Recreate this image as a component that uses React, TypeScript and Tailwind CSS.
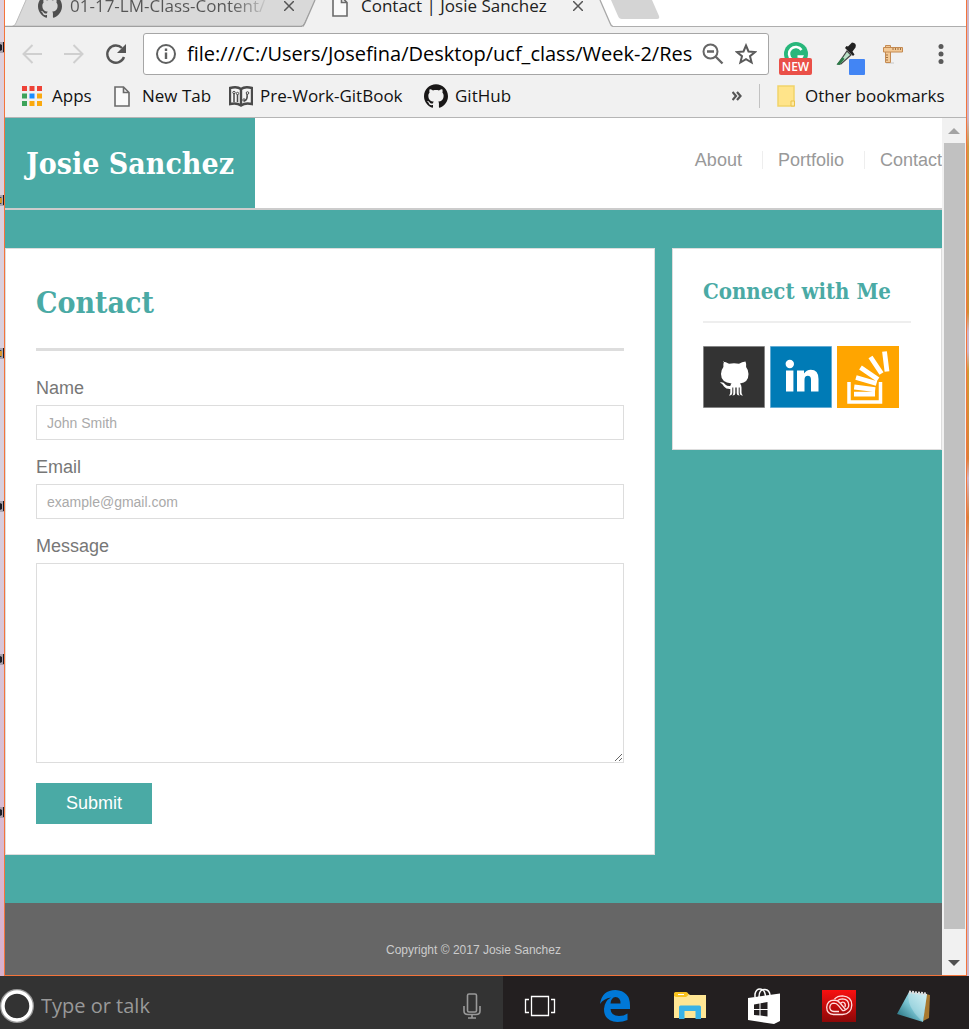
import type { ReactNode } from "react";
import { SiGithub } from "react-icons/si";

const chromeFont = "font-['Open_Sans','Noto_Sans',sans-serif]";
const headingFont = "font-['DejaVu_Serif_Condensed','DejaVu_Serif',serif] font-bold";

function IconButton({ label, className = "", children }: { label: string; className?: string; children: ReactNode }) {
  return (
    <button type="button" aria-label={label} className={`flex shrink-0 items-center justify-center ${className}`}>
      {children}
    </button>
  );
}

function PageIcon({ className = "" }: { className?: string }) {
  return (
    <svg viewBox="0 0 16 21" className={`h-[21px] w-4 shrink-0 ${className}`} fill="none" stroke="#6b6b6b" strokeWidth="1.6">
      <path d="M1 1h8.5L15 6.500V20H1zM9.500 1v5.500H15" fill="#fafafa" />
    </svg>
  );
}

function CloseIcon() {
  return (
    <svg viewBox="0 0 10 10" className="size-[10px]" stroke="#555" strokeWidth="1.5">
      <path d="M0 0l10 10M10 0L0 10" />
    </svg>
  );
}

function TabStrip() {
  return (
    <div className="flex h-[27px] items-end overflow-hidden bg-white">
      <div className="relative flex h-[42px] w-[310px] shrink-0 items-center pl-[33px]">
        <svg viewBox="0 0 310 27" className="absolute bottom-0 left-0 h-[27px] w-[310px]">
          <path d="M7 26.500Q10 26 11 23L21 0H311L300 23Q299 26 296 26.500z" fill="#d9d9d9" />
          <path d="M7 26.500Q10 26 11 23L21 0" fill="none" stroke="#bbb" />
          <path d="M0 26.500H296Q299 26 300 23L311 0" fill="none" stroke="#a0a0a0" strokeWidth="1.3" />
        </svg>
        <SiGithub className="relative size-6 shrink-0 text-[#4f4f4f]" />
        <a
          href="#class-content"
          className="relative ml-2 w-[200px] overflow-hidden whitespace-nowrap bg-linear-to-r from-[#555] from-80% to-[#d9d9d9] bg-clip-text text-[17px] leading-6 text-transparent"
        >
          01-17-LM-Class-Content/
        </a>
        <IconButton label="Close tab" className="relative ml-3.5">
          <CloseIcon />
        </IconButton>
      </div>
      <div className="relative -ml-3 flex h-[42px] w-[310px] shrink-0 items-center pl-[29px]">
        <svg viewBox="0 0 310 27" className="absolute bottom-0 left-0 h-[27px] w-[310px]">
          <path d="M0 27Q1 26 2 23L12 0H297L307 23Q308 26 310 27z" fill="#f1f1f1" />
          <path d="M0 26.500L2 23L12 0" fill="none" stroke="#a0a0a0" strokeWidth="1.3" />
          <path d="M297 0L307 23Q308 26 310 26.500" fill="none" stroke="#a8a8a8" strokeWidth="1.3" />
        </svg>
        <PageIcon className="relative" />
        <a href="#contact" className="relative ml-[13px] w-[194px] whitespace-nowrap text-[17px] leading-6 text-[#222]">
          Contact | Josie Sanchez
        </a>
        <IconButton label="Close tab" className="relative ml-[18px]">
          <CloseIcon />
        </IconButton>
      </div>
      <div className="h-[27px] flex-1 border-b border-[#aeaeae]">
        <svg viewBox="0 0 51 20" className="-ml-1 h-5 w-[51px]">
          <path d="M2 0L9 16Q10 19 13 19H48Q51 19 50 16L43 0z" fill="#d4d4d4" />
        </svg>
      </div>
    </div>
  );
}

function Toolbar() {
  return (
    <div className="flex h-12 items-center bg-[#f1f1f1] pt-1.5 pl-[17px]">
      <IconButton label="Back">
        <svg viewBox="0 0 20 20" className="size-5" fill="none" stroke="#cfcfcf" strokeWidth="2">
          <path d="M20 10H1.500M10.500 1L1.500 10l9 9" />
        </svg>
      </IconButton>
      <IconButton label="Forward" className="ml-[22px]">
        <svg viewBox="0 0 20 20" className="size-5" fill="none" stroke="#cfcfcf" strokeWidth="2">
          <path d="M0 10h18.500M9.500 1l9 9-9 9" />
        </svg>
      </IconButton>
      <IconButton label="Reload" className="ml-[21px]">
        <svg viewBox="0 0 22 22" className="size-[22px]">
          <path d="M19 14A8.600 8.600 0 1 1 17 5" fill="none" stroke="#555" strokeWidth="2.400" />
          <path d="M21 1v9h-9z" fill="#555" />
        </svg>
      </IconButton>
      <div className="ml-4 flex h-[42px] min-w-0 flex-1 items-center rounded-[3px] border border-[#a6a6a6] bg-white px-[11px]">
        <IconButton label="View site information">
          <svg viewBox="0 0 22 22" className="size-[22px]" fill="none" stroke="#5f6060" strokeWidth="2">
            <circle cx="11" cy="11" r="9" />
            <path d="M11 9.500V16M11 5.500V8" strokeWidth="2.400" />
          </svg>
        </IconButton>
        <input
          aria-label="Address"
          readOnly
          value="file:///C:/Users/Josefina/Desktop/ucf_class/Week-2/Resume"
          className="ml-2.5 min-w-0 flex-1 bg-transparent text-[20px] text-black outline-none"
        />
        <IconButton label="Zoom" className="ml-2.5">
          <svg viewBox="0 0 22 22" className="size-[22px]" fill="none" stroke="#666" strokeWidth="2">
            <circle cx="8.500" cy="8.500" r="7" />
            <path d="M5 8.500h7M13.500 13.500l7 7" strokeWidth="2.400" />
          </svg>
        </IconButton>
        <IconButton label="Bookmark this page" className="ml-[11px]">
          <svg viewBox="0 0 22 22" className="size-[22px]" fill="none" stroke="#5a5a5a" strokeWidth="2">
            <path d="M11 2.500l2.500 6 6.500.5-5 4.200 1.600 6.300L11 16.100l-5.600 3.400L7 13.200 2 9l6.500-.5z" />
          </svg>
        </IconButton>
      </div>
      <button
        type="button"
        aria-label="Grammarly"
        className="relative ml-2.5 flex h-[33px] w-[33px] shrink-0 items-start justify-center self-end"
      >
        <svg viewBox="0 0 24 24" className="size-6">
          <circle cx="12" cy="12" r="12" fill="#28b77b" />
          <path d="M17.500 8A6.800 6.800 0 1 0 18 14.500h-4.500" fill="none" stroke="#fff" strokeWidth="2.500" />
        </svg>
        <span className="absolute bottom-0 left-0 flex h-[17px] w-full items-center justify-center rounded-[2px] bg-[#ea5048] text-[12px] font-semibold text-white">
          NEW
        </span>
      </button>
      <IconButton label="Color picker" className="ml-6 self-end">
        <svg viewBox="0 0 29 33" className="h-[33px] w-[29px]">
          <path d="M2 22L11 9l4 4L5 22z" fill="#b9dfc6" stroke="#444" strokeWidth="1.200" />
          <path d="M.5 22.500l6-7.500 2 2-5 6z" fill="#2d7a48" />
          <path d="M9 6l8 8 1.500-1.500-2-3 3-4Q21 1 16 .5l-4 4-1.500-.5z" fill="#222" />
          <rect x="13" y="17" width="16" height="16" rx="1" fill="#4285f4" />
        </svg>
      </IconButton>
      <IconButton label="Page ruler" className="ml-[18px]">
        <svg viewBox="0 0 20 20" className="size-5">
          <path d="M3 19h8" stroke="#d4d4d4" strokeWidth="1.500" />
          <path d="M2.500 1.500h5v17h-5z" fill="#f3c995" stroke="#c48a52" />
          <path d="M.5 3.500h19v4.500H.5z" fill="#f3c995" stroke="#c48a52" />
          <path d="M10 4v2M12.500 4v2M15 4v2M17.500 4v2M3 11h2M3 13.500h2M3 16h2" stroke="#8c5a2f" strokeWidth=".8" />
        </svg>
      </IconButton>
      <IconButton label="Menu" className="mr-[22px] ml-[35px]">
        <svg viewBox="0 0 6 20" className="h-5 w-1.5" fill="#5a5a5a">
          <circle cx="3" cy="2.500" r="2.500" />
          <circle cx="3" cy="10" r="2.500" />
          <circle cx="3" cy="17.500" r="2.500" />
        </svg>
      </IconButton>
    </div>
  );
}

function Bookmark({ icon, label, className = "" }: { icon: ReactNode; label: string; className?: string }) {
  return (
    <a href="#bookmark" className={`flex shrink-0 items-center ${className}`}>
      {icon}
      <span>{label}</span>
    </a>
  );
}

function BookmarksBar() {
  return (
    <div className="flex h-[43px] items-center border-b border-[#b5b5b5] bg-[#f1f1f1] pr-[21px] pl-[17px] text-[17px] text-[#111]">
      <Bookmark
        label="Apps"
        className="w-[92px] gap-2.5"
        icon={
          <svg viewBox="0 0 20 20" className="size-5 shrink-0">
            <path d="M0 0h5v5H0zM7.500 0h5v5h-5zM15 0h5v5h-5z" fill="#ee4237" />
            <path d="M0 7.500h5v5H0zM0 15h5v5H0z" fill="#3da35a" />
            <path d="M7.500 7.500h5v5h-5z" fill="#1a8cff" />
            <path d="M15 7.500h5v5h-5zM7.500 15h5v5h-5zM15 15h5v5h-5z" fill="#faa90f" />
          </svg>
        }
      />
      <Bookmark label="New Tab" className="w-[115px] gap-3" icon={<PageIcon />} />
      <Bookmark
        label="Pre-Work-GitBook"
        className="w-[195px] gap-[7px]"
        icon={
          <svg viewBox="0 0 24 21" className="h-[21px] w-6 shrink-0" fill="none" stroke="#4a4a4a">
            <path d="M1 2Q8 0 12 3Q16 0 23 2V18Q16 16.500 12 19.500Q8 16.500 1 18z" strokeWidth="2.400" fill="#f5f5f5" />
            <path d="M12 3v17" strokeWidth="2.400" />
            <path d="M5 7v9M8.500 16V8.500M15 15q4-1 3-7" strokeWidth="1.500" />
            <circle cx="5" cy="6.500" r="1.200" />
            <circle cx="8.500" cy="7.500" r="1.200" />
            <circle cx="18.500" cy="7" r="1.300" />
            <circle cx="15" cy="14" r="1.200" />
          </svg>
        }
      />
      <Bookmark label="GitHub" className="gap-[7px]" icon={<SiGithub className="size-6 shrink-0 text-[#191717]" />} />
      <IconButton label="More bookmarks" className="ml-auto">
        <svg viewBox="0 0 10 10" className="size-2.5" fill="none" stroke="#555" strokeWidth="2.200">
          <path d="M.5 1L4 5 .5 9M5 1l3.500 4L5 9" />
        </svg>
      </IconButton>
      <div className="mx-[17px] h-6 w-px bg-[#c2c2c2]" />
      <Bookmark
        label="Other bookmarks"
        className="w-[168px] gap-2.5"
        icon={
          <svg viewBox="0 0 18 22" className="h-[22px] w-[18px] shrink-0">
            <path d="M1 1h16v20H1z" fill="#ffe48a" stroke="#f1d36b" strokeWidth="1.500" />
            <path d="M14 21v-5h3.500v5z" fill="#ffeaa2" stroke="#eac24a" />
          </svg>
        }
      />
    </div>
  );
}

function SiteHeader() {
  return (
    <header className="flex h-[92px] items-center justify-between border-b-2 border-[#ccc] bg-white">
      <h1 className={`flex h-full w-[250px] items-center justify-center bg-[#4aaaa5] text-[30px] text-white ${headingFont}`}>
        <a href="#home">Josie Sanchez</a>
      </h1>
      <nav className="mb-1.5 flex text-[18px] leading-[18px] text-[#999]">
        <a href="#about" className="border-r border-[#eee] pr-5">About</a>
        <a href="#portfolio" className="border-r border-[#eee] pr-5 pl-[15px]">Portfolio</a>
        <a href="#contact" className="pl-[15px]">Contact</a>
      </nav>
    </header>
  );
}

function ContactForm() {
  const label = "mb-[3px] block text-[18px] leading-7 text-[#777]";
  const field = "block w-full border border-[#ddd] bg-white px-2.5 text-[14px] text-[#777] outline-none placeholder:text-[#aaa]";
  return (
    <section id="contact" className="min-w-0 flex-1 border border-[#ddd] bg-white p-[30px]">
      <h2 className={`mb-[23px] border-b-[3px] border-[#ddd] pb-[21px] text-[30px] leading-[48px] text-[#4aaaa5] ${headingFont}`}>
        Contact
      </h2>
      <form onSubmit={(e) => e.preventDefault()}>
        <label htmlFor="name" className={label}>Name</label>
        <input id="name" placeholder="John Smith" className={`${field} mb-[13px] h-[35px]`} />
        <label htmlFor="email" className={label}>Email</label>
        <input id="email" type="email" placeholder="example@gmail.com" className={`${field} mb-[13px] h-[35px]`} />
        <label htmlFor="message" className={label}>Message</label>
        <textarea id="message" className={`${field} mb-5 h-[200px] resize-y py-2`} />
        <button type="submit" className="block h-[41px] bg-[#4aaaa5] px-[30px] text-[18px] text-white">
          Submit
        </button>
      </form>
    </section>
  );
}

function Connect() {
  return (
    <aside className="w-[270px] shrink-0 border border-[#ddd] bg-white px-[30px] pt-[30px] pb-[41px]">
      <h3 className={`mb-[23px] border-b-2 border-[#eee] pb-[18px] text-[22px] leading-6 whitespace-nowrap text-[#4aaaa5] ${headingFont}`}>
        Connect with Me
      </h3>
      <div className="flex gap-[5px]">
        <a href="#github" aria-label="GitHub">
          <svg viewBox="0 0 62 62" className="size-[62px]">
            <rect width="62" height="62" fill="#aaa" />
            <rect x=".7" y=".7" width="60.600" height="60.600" fill="#333" />
            <path
              d="M19.500 15.500q3.500.3 6.500 2.200q5-.8 10 0q3-2 6.500-2.200q1.200 3 .6 5.500q2.400 3 2.400 7q0 8.500-8.500 9.500q1.500 1.500 1.500 4v5q0 2 1.500 3q-3.300.3-3.300-3v-5h-1v5.500q0 1.500 1 2.500q-3 0-3-2.500v-5.500h-1.400v5.500q0 2.500-3 2.500q1-1 1-2.500v-5.500h-1v5q0 3.300-3.500 3q1.500-1 1.500-3v-3.500q-4.300.2-6.300-2.500q-1.500-3-4.200-4q3.500-1 5.500 2q2 2 5 1.500q.2-1.500 1.200-2.500q-10.500-1-10.500-9.500q0-4 2.400-7q-.5-2.500.6-5.500z"
              fill="#fff"
            />
          </svg>
        </a>
        <a href="#linkedin" aria-label="LinkedIn">
          <svg viewBox="0 0 62 62" className="size-[62px]">
            <rect width="62" height="62" fill="#8fc1e0" />
            <rect x=".7" y=".7" width="60.600" height="60.600" fill="#007bb6" />
            <circle cx="19.800" cy="18" r="4.200" fill="#fff" />
            <path
              d="M16 24.500h7.400v21H16zM27 24.500h7v3q2.300-3.800 6.800-3.800q7.700 0 7.700 9.300V45.500H41V34q0-4.200-3.200-4.200q-3.300 0-3.300 4.200V45.500H27z"
              fill="#fff"
            />
          </svg>
        </a>
        <a href="#stack-overflow" aria-label="Stack Overflow">
          <svg viewBox="0 0 62 62" className="size-[62px]">
            <rect width="62" height="62" fill="#ffa500" />
            <path d="M12 36v20h31.500V36" fill="none" stroke="#fff" strokeWidth="3.500" />
            <path
              d="M17 48.200h21M17.200 41l21 2.600M19 31.500l20.500 6M23.500 21.500l17.500 12M33.500 11l11 16.500M47.500 5.500l2.500 20"
              stroke="#fff"
              strokeWidth="4.800"
            />
          </svg>
        </a>
      </div>
    </aside>
  );
}

function Scrollbar() {
  return (
    <div className="flex w-6 shrink-0 flex-col items-center bg-[#f1f1f1]">
      <IconButton label="Scroll up" className="h-[25px] w-full">
        <svg viewBox="0 0 12 6" className="h-1.5 w-3"><path d="M0 6l6-6 6 6z" fill="#a3a3a3" /></svg>
      </IconButton>
      <div className="w-[21px] flex-1 bg-[#c1c1c1]" />
      <IconButton label="Scroll down" className="mt-[21px] h-[25px] w-full">
        <svg viewBox="0 0 12 6" className="h-1.5 w-3"><path d="M0 0h12L6 6z" fill="#505050" /></svg>
      </IconButton>
    </div>
  );
}

function Taskbar() {
  return (
    <div className="flex h-[53px] bg-[#231f20]">
      <div className="flex w-[503px] shrink-0 items-center bg-[#333] pt-[7px]">
        <IconButton label="Cortana">
          <svg viewBox="0 0 34 34" className="size-[34px]" fill="none">
            <circle cx="17" cy="17" r="15" stroke="#999" strokeWidth="4" />
            <circle cx="17" cy="17" r="14" stroke="#fff" strokeWidth="3.400" />
          </svg>
        </IconButton>
        <input
          aria-label="Type or talk"
          placeholder="Type or talk"
          className="ml-[7px] min-w-0 flex-1 bg-transparent text-[20px] outline-none placeholder:text-[#999]"
        />
        <IconButton label="Voice search" className="mr-[22px]">
          <svg viewBox="0 0 18 26" className="h-[26px] w-[18px]" fill="none" stroke="#999" strokeWidth="1.600">
            <rect x="4.500" y="1" width="9" height="18" rx="1.500" />
            <path d="M1 13v5q0 3.500 4 3.500h8q4 0 4-3.500v-5M9 21.500V25M5 25h8" />
          </svg>
        </IconButton>
      </div>
      <div className="grid flex-1 grid-cols-6 items-center pt-1.5 pr-[18px]">
        <IconButton label="Task view">
          <svg viewBox="0 0 32 22" className="h-[22px] w-8" fill="none" stroke="#fff" strokeWidth="1.300">
            <path d="M7.500 1.500h17v19h-17zM5 4.500H1.500v13H5M27 4.500h3.500v13H27" />
          </svg>
        </IconButton>
        <IconButton label="Edge">
          <svg viewBox="0 0 30 32" className="h-8 w-[30px]">
            <path
              d="M0 14Q2 0 15.500 0Q30 1 30 15.500V19H10.500Q11 26 19 26Q24 26 27.500 23.500V30Q23 32 17.500 32Q4 31.500 4 19Q4.500 11 11 7.500Q3.500 8.500 0 14zM10.500 13.500h10Q20.500 7 15.500 7Q11 7.500 10.500 13.500z"
              fill="#0078d7"
            />
          </svg>
        </IconButton>
        <IconButton label="File Explorer">
          <svg viewBox="0 0 32 27" className="h-[27px] w-8">
            <path d="M0 2Q0 1 1 1H13L16 3H32V26H0z" fill="#ffe694" />
            <path d="M0 4V1.500Q0 0 1.500 0H12q2 0 2.500 3L12 5H2z" fill="#f9c31f" />
            <path d="M4 2.500h6" stroke="#fff" />
            <path d="M5 27V15q0-1.500 1.500-1.500h19q1.500 0 1.500 1.500V27h-5.500v-8h-11v8z" fill="#39b2e6" />
          </svg>
        </IconButton>
        <IconButton label="Store">
          <svg viewBox="0 0 32 36" className="h-9 w-8">
            <path d="M7 9V6Q8 1 12 1Q16.500 1 17.500 8M11 9Q11 1 17 1.500Q21.500 2 22 7" fill="none" stroke="#fff" strokeWidth="1.500" />
            <path d="M0 10L32 5.500V33L26 36 0 32z" fill="#fff" />
            <path d="M6 16.500l5.500-1v5.500H6zM12.500 15.300l7-1.200V21h-7zM6 22h5.500v5.500l-5.500-.6zM12.500 22h7v6.500l-7-.9z" fill="#231f20" />
          </svg>
        </IconButton>
        <IconButton label="Creative Cloud">
          <svg viewBox="0 0 34 32" className="h-8 w-[34px]">
            <defs>
              <linearGradient id="cloud-red" x1="0" y1="0" x2="0" y2="1">
                <stop offset="0" stopColor="#f91010" />
                <stop offset="1" stopColor="#8c0707" />
              </linearGradient>
            </defs>
            <rect width="34" height="32" fill="url(#cloud-red)" />
            <g fill="none" stroke="#ffdede" strokeWidth="1.300">
              <path d="M12.500 9Q15.500 5.800 20.500 5.800Q29.800 6.500 29.800 15Q29.500 24 20.500 24.500H11.500Q4.700 24 4.700 17.200Q5.200 10.500 12 10.200Q16 10.400 18.500 13.500L23.500 19.500" />
              <path d="M17 21.500H12Q7.800 21.200 7.800 17.200Q8.300 13.200 12 13.200Q14.500 13.300 16.500 15.700L20.500 20.500Q21 21 22.500 20.300Q26.800 18.500 26.800 15Q26.500 9 20.500 8.800Q17.500 8.800 15.300 10.800" />
              <path d="M18.500 13.500Q20 11.500 22 12.500Q24 14 23 17" />
            </g>
          </svg>
        </IconButton>
        <IconButton label="Notepad">
          <svg viewBox="0 0 33 32" className="h-8 w-[33px]">
            <defs>
              <linearGradient id="notepad-blue" x1="0" y1="1" x2="1" y2="0">
                <stop offset="0" stopColor="#14606f" />
                <stop offset=".5" stopColor="#7cc6d4" />
                <stop offset="1" stopColor="#c8eef3" />
              </linearGradient>
            </defs>
            <path d="M29 4l4 1-1 23-6 3z" fill="#a8792f" />
            <path d="M12 2L30 4 26 32 0 24z" fill="url(#notepad-blue)" />
            <path d="M12 2q-4 14 14 30L30 4z" fill="#fff" opacity=".25" />
            <path d="M12 2L30 4" stroke="#ddd" strokeWidth="3" strokeDasharray="2 1" />
          </svg>
        </IconButton>
      </div>
    </div>
  );
}

function DesktopEdge() {
  return (
    <div className="flex w-1 shrink-0 flex-col gap-[139px] overflow-hidden bg-linear-to-b from-[#dfd0dc] via-[#d8d0de] to-[#d8b0cc] pt-10">
      {[0, 1, 2, 3, 4, 5].map((n) => (
        <svg key={n} viewBox="0 0 4 14" className="h-3.5 w-1 shrink-0" aria-hidden="true">
          <path d="M0 2h4v11H0z" fill="#8b8790" opacity=".6" />
          <path d="M0 4l2 1v5l-2 1zM3 2h1v10H3z" fill="#1c1c24" />
          {n === 1 || n === 2 ? <path d="M0 5h2v5H0z" fill="#d9962e" /> : null}
        </svg>
      ))}
    </div>
  );
}

export default function App() {
  return (
    <div className={`flex min-h-screen flex-col ${chromeFont}`}>
      <div className="flex flex-1">
        <DesktopEdge />
        <div className="flex min-w-0 flex-1 flex-col border-x border-b border-[#f4743b]">
          <TabStrip />
          <Toolbar />
          <BookmarksBar />
          <div className="flex flex-1">
            <div className="flex min-w-0 flex-1 flex-col bg-[#4aaaa5] font-['Liberation_Sans',sans-serif]">
              <SiteHeader />
              <main className="flex flex-1 items-start gap-[17px] pt-[38px] pb-12">
                <ContactForm />
                <Connect />
              </main>
              <footer className="flex h-[72px] items-center justify-center bg-[#666] pt-[21px] text-[12px] text-[#ccc]">
                Copyright © 2017 Josie Sanchez
              </footer>
            </div>
            <Scrollbar />
          </div>
        </div>
        <div className="w-0.5 shrink-0 bg-[linear-gradient(#cdb8cc_12%,#cf9a45_15%,#cf8f35_32%,#cdb8cc_34%,#cdb8cc_36%,#d09a35_38%,#d8803a_47%,#cdb8cc_49%,#d8803a_53%,#cdb8cc_58%)]" />
      </div>
      <Taskbar />
    </div>
  );
}
